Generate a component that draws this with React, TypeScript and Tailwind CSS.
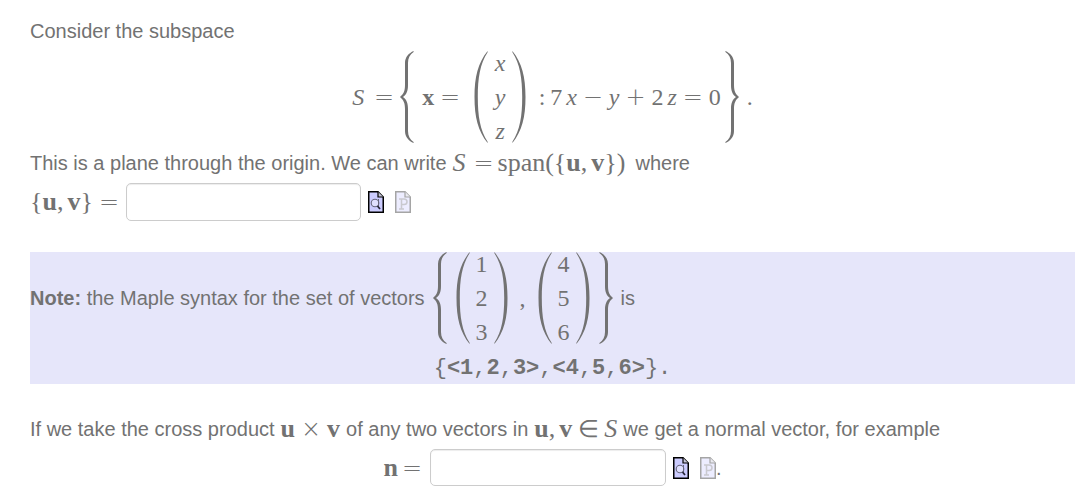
import type { ReactNode } from "react";

function M({ children, size = "inline" }: { children: ReactNode; size?: "inline" | "display" }) {
  return (
    <span className={`inline-flex items-center font-['Liberation_Serif',serif] leading-6 whitespace-nowrap ${size === "display" ? "text-[24px]" : "text-[26px]"}`}>
      {children}
    </span>
  );
}

function Op({ children, className = "w-8" }: { children: ReactNode; className?: string }) {
  return <span className={`inline-flex shrink-0 justify-center font-['DejaVu_Sans_Light','DejaVu_Sans',sans-serif] text-[24px] leading-6 font-extralight ${className}`}>{children}</span>;
}

function Brace({ flip = false }: { flip?: boolean }) {
  return (
    <svg aria-hidden="true" viewBox="0 0 14 92" fill="currentColor" className={`h-[92px] w-[14px] shrink-0 ${flip ? "-scale-x-100" : ""}`}>
      <path d="M13.6 0C9 2 5 6 5 12V34C5 40 3.500 43 0 46C3.500 49 5 52 5 58V80C5 86 9 90 13.600 92V91C10 88.500 8 85 8 80V58C8 52 6.500 48.500 3 46C6.500 43.500 8 40 8 34V12C8 7 10 3.500 13.600 1Z" />
    </svg>
  );
}

function Paren({ flip = false }: { flip?: boolean }) {
  return (
    <svg aria-hidden="true" viewBox="0 0 14 92" fill="currentColor" className={`h-[92px] w-[14px] shrink-0 ${flip ? "-scale-x-100" : ""}`}>
      <path d="M13.6 0C4 12 .5 26 .5 46S4 80 13.600 92V90.800C6 79 3.800 65 3.800 46S6 13 13.600 1.200Z" />
    </svg>
  );
}

function Vector({ items, italic = false }: { items: string[]; italic?: boolean }) {
  return (
    <span className="flex items-center">
      <Paren />
      <span className={`flex w-6 flex-col items-center gap-[10px] ${italic ? "italic" : ""}`}>
        {items.map((t) => (
          <span key={t}>{t}</span>
        ))}
      </span>
      <Paren flip />
    </span>
  );
}

function PageIcon({ kind }: { kind: "preview" | "plot" }) {
  return (
    <svg aria-hidden="true" viewBox="0 0 16 22" className={`h-[22px] w-4 ${kind === "plot" ? "opacity-35" : ""}`}>
      <path d="M.75.75H10L15.250 6V21.250H.75Z" fill="#ccccff" stroke="#000" strokeWidth="1.5" />
      <path d="M10 .75V6H15.250" fill="#c4c4d8" stroke="#000" strokeWidth="1.200" />
      {kind === "preview" ? (
        <g fill="none" stroke="#66667c">
          <circle cx="7" cy="12" r="3.800" fill="#e0e0ff" strokeWidth="1.100" />
          <path d="M10.500 8V15" strokeWidth="1" />
          <path d="M9.500 15L12 18" strokeWidth="1.700" stroke="#222233" />
        </g>
      ) : (
        <path d="M4 8H9C13 8 13 13.500 9 13.500H6.500M6.500 8V18M4 18H9" fill="none" stroke="#666677" strokeWidth="1.500" />
      )}
    </svg>
  );
}

function Answer({ label, id, className }: { label: string; id: string; className: string }) {
  return (
    <>
      <input id={id} aria-label={label} type="text" className={`rounded-[5px] border border-[#cccccc] bg-white px-2 text-[#727272] shadow-[inset_0_1px_1px_rgba(0,0,0,0.075)] outline-none ${className}`} />
      <button type="button" aria-label={`Preview ${label}`} className="ml-[7px]"><PageIcon kind="preview" /></button>
      <button type="button" aria-label={`Plot ${label}`} className="ml-[11px]"><PageIcon kind="plot" /></button>
    </>
  );
}

export default function App() {
  return (
    <main className="bg-white pt-4 pr-3 pb-1 pl-[30px] font-['Liberation_Sans',Arial,sans-serif] text-[20px] leading-[30px] text-[#727272]">
      <p>Consider the subspace</p>
      <div className="mt-[5px] flex justify-center">
        <M size="display">
          <i className="mr-1">S</i><Op>=</Op><Brace />
          <b className="ml-2">x</b><Op>=</Op>
          <span className="ml-2"><Vector items={["x", "y", "z"]} italic /></span>
          <span className="w-6 pl-2 text-center">:</span>
          <span>7</span><i className="ml-1">x</i><Op>−</Op><i>y</i><Op>+</Op>
          <span>2</span><i className="ml-1">z</i><Op>=</Op><span className="mr-1">0</span>
          <Brace flip /><span className="ml-2">.</span>
        </M>
      </div>
      <p className="mt-[5px] flex items-center gap-[6px] whitespace-nowrap">
        <span>This is a plane through the origin. We can write</span>
        <M><i className="mr-1">S</i><Op className="w-7">=</Op><span>span({"{"}<b>u</b>,</span><span className="ml-1"><b>v</b>{"}"})</span></M>
        <span className="pl-1">where</span>
      </p>
      <div className="mt-[5px] flex items-center">
        <label htmlFor="uv" className="flex"><M><span>{"{"}<b>u</b>,</span><span className="ml-1"><b>v</b>{"}"}</span><Op>=</Op></M></label>
        <Answer label="u, v" id="uv" className="ml-px h-[38px] w-[235px]" />
      </div>
      <section className="mt-[31px] bg-[#e6e6fa]">
        <div className="flex items-center gap-2">
          <span className="whitespace-nowrap"><b>Note:</b> the Maple syntax for the set of vectors</span>
          <M size="display">
            <Brace /><span className="ml-[9px]"><Vector items={["1", "2", "3"]} /></span>
            <span className="w-[30px] text-center">,</span>
            <Vector items={["4", "5", "6"]} /><span className="ml-[9px]"><Brace flip /></span>
          </M>
          <span>is</span>
        </div>
        <p className="pt-[10px] text-center font-['Liberation_Mono',monospace] text-[22px]">
          {"{"}<b>{"<1"}</b>,<b>2</b>,<b>{"3>"}</b>,<b>{"<4"}</b>,<b>5</b>,<b>{"6>"}</b>{"}."}
        </p>
      </section>
      <p className="mt-[30px] flex items-center gap-[6px] whitespace-nowrap">
        <span>If we take the cross product</span>
        <M><b>u</b><Op>×</Op><b>v</b></M>
        <span>of any two vectors in</span>
        <M><b>u</b>,<b className="ml-1">v</b><Op>∈</Op><i>S</i></M>
        <span>we get a normal vector, for example</span>
      </p>
      <div className="mt-[5px] flex items-center justify-center">
        <label htmlFor="normal" className="flex"><M><b>n</b><Op className="w-7">=</Op></M></label>
        <Answer label="n" id="normal" className="ml-1 h-[37px] w-[236px]" /><span>.</span>
      </div>
    </main>
  );
}
